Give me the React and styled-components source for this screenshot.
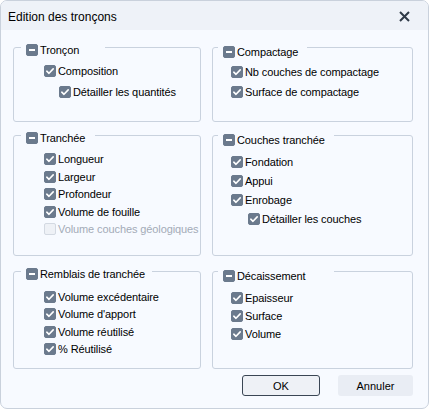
import React from 'react'
import styled, { createGlobalStyle } from 'styled-components'

const Global = createGlobalStyle`
  html, body { margin: 0; padding: 0; background: #ffffff; }
  body { font-family: "Liberation Sans", Arial, sans-serif; }
`

const groups = [
  [
    {
      side: 'left', title: 'Tronçon', width: 84, pad: 8, gap: 9,
      items: [
        { label: 'Composition' },
        { label: 'Détailler les quantités', nested: true },
      ],
    },
    {
      side: 'right', title: 'Compactage', width: 89, pad: 7, gap: 8,
      items: [
        { label: 'Nb couches de compactage' },
        { label: 'Surface de compactage' },
      ],
    },
  ],
  [
    {
      side: 'left', title: 'Tranchée', width: 74, pad: 8, gap: 5.5,
      items: [
        { label: 'Longueur' },
        { label: 'Largeur' },
        { label: 'Profondeur' },
        { label: 'Volume de fouille' },
        { label: 'Volume couches géologiques', disabled: true },
      ],
    },
    {
      side: 'right', title: 'Couches tranchée', width: 116, pad: 9, gap: 7,
      items: [
        { label: 'Fondation' },
        { label: 'Appui' },
        { label: 'Enrobage' },
        { label: 'Détailler les couches', nested: true },
      ],
    },
  ],
  [
    {
      side: 'left', title: 'Remblais de tranchée', width: 131, pad: 10, gap: 5.3,
      items: [
        { label: 'Volume excédentaire' },
        { label: "Volume d'apport" },
        { label: 'Volume réutilisé' },
        { label: '% Réutilisé' },
      ],
    },
    {
      side: 'right', title: 'Décaissement', width: 116, pad: 9, gap: 6,
      items: [
        { label: 'Epaisseur' },
        { label: 'Surface' },
        { label: 'Volume' },
      ],
    },
  ],
]

const rows = [
  { top: 0, h: 75 },
  { top: 13, h: 121 },
  { top: 15, h: 98 },
]

function Box({ state }) {
  return (
    <Check $state={state}>
      {state === 'checked' && (
        <svg width="12" height="12" viewBox="0 0 12 12">
          <path d="M2.8 6.2 L5 8.3 L9.2 3.9" fill="none" stroke="#fff" strokeWidth="1.6" strokeLinecap="round" strokeLinejoin="round" />
        </svg>
      )}
      {state === 'mixed' && (
        <svg width="12" height="12" viewBox="0 0 12 12">
          <rect x="3" y="5" width="6" height="2" fill="#fff" />
        </svg>
      )}
    </Check>
  )
}

function Group({ g }) {
  return (
    <Frame $side={g.side}>
      <Legend $side={g.side} $w={g.width}>
        <Box state="mixed" />
        <Label>{g.title}</Label>
      </Legend>
      <List $pad={g.pad} $gap={g.gap}>
        {g.items.map((it) => (
          <Item key={it.label} $indent={g.side === 'left' ? (it.nested ? 45 : 30) : (it.nested ? 35 : 18)}>
            <Box state={it.disabled ? 'disabled' : 'checked'} />
            <Label $off={it.disabled}>{it.label}</Label>
          </Item>
        ))}
      </List>
    </Frame>
  )
}

export default function App() {
  return (
    <>
      <Global />
      <Window>
        <TitleBar>
          <Title>Edition des tronçons</Title>
          <Close>
            <svg width="11" height="11" viewBox="0 0 11 11">
              <path d="M1 1 L10 10 M10 1 L1 10" stroke="#2f3a47" strokeWidth="2" />
            </svg>
          </Close>
        </TitleBar>
        <Body>
          {groups.map((pair, i) => (
            <Row key={i} $top={rows[i].top} $h={rows[i].h}>
              <Group g={pair[0]} />
              <Group g={pair[1]} />
            </Row>
          ))}
          <Buttons>
            <Button $primary>OK</Button>
            <Button>Annuler</Button>
          </Buttons>
        </Body>
      </Window>
    </>
  )
}

const Window = styled.div`
  box-sizing: border-box;
  width: 429px;
  height: 409px;
  border: 1px solid #c9d1dc;
  border-radius: 7px;
  overflow: hidden;
  background: #f7faff;
  display: flex;
  flex-direction: column;
`

const TitleBar = styled.div`
  height: 29px;
  flex: none;
  background: #eef2f8;
  display: flex;
  align-items: center;
  justify-content: space-between;
  padding: 0 18px 0 7px;
`

const Title = styled.span`
  font-size: 12px;
  color: #000;
  padding-top: 2px;
`

const Close = styled.span`
  display: flex;
  padding-top: 1px;
`

const Body = styled.div`
  flex: 1;
  display: flex;
  flex-direction: column;
  padding: 17px 15px 0 12px;
`

const Row = styled.div`
  display: grid;
  grid-template-columns: 188px 201px;
  column-gap: 11px;
  height: ${(p) => p.$h}px;
  margin-top: ${(p) => p.$top}px;
`

const Frame = styled.div`
  box-sizing: border-box;
  border: 1px solid #c9d2de;
  border-radius: 3px;
  display: flex;
  flex-direction: column;
  align-items: flex-start;
  min-width: 0;
`

const Legend = styled.div`
  box-sizing: border-box;
  display: flex;
  align-items: center;
  gap: 2px;
  height: 14px;
  width: ${(p) => p.$w}px;
  margin-top: ${(p) => (p.$side === 'left' ? -5 : -3)}px;
  margin-left: ${(p) => (p.$side === 'left' ? 7 : 5)}px;
  padding-left: 5px;
  background: #f7faff;
`

const List = styled.div`
  display: flex;
  flex-direction: column;
  gap: ${(p) => p.$gap}px;
  padding-top: ${(p) => p.$pad}px;
`

const Item = styled.div`
  display: flex;
  align-items: center;
  gap: 2px;
  height: 12px;
  margin-left: ${(p) => p.$indent}px;
`

const Check = styled.span`
  box-sizing: border-box;
  flex: none;
  width: 12px;
  height: 12px;
  border-radius: 2px;
  display: flex;
  background: ${(p) => (p.$state === 'disabled' ? '#eef1f6' : '#6b7a8d')};
  border: 1px solid ${(p) => (p.$state === 'disabled' ? '#d3d9e2' : '#6b7a8d')};
  & > svg { margin: -1px; }
`

const Label = styled.span`
  font-size: 11px;
  letter-spacing: -0.1px;
  line-height: 12px;
  white-space: nowrap;
  color: ${(p) => (p.$off ? '#a3abb7' : '#000')};
`

const Buttons = styled.div`
  display: flex;
  justify-content: flex-end;
  gap: 18px;
  margin-top: 6px;
`

const Button = styled.button`
  box-sizing: border-box;
  height: 21px;
  width: ${(p) => (p.$primary ? 78 : 75)}px;
  font-family: "Liberation Sans", Arial, sans-serif;
  font-size: 11px;
  color: #000;
  border-radius: 3px;
  border: 1px solid ${(p) => (p.$primary ? '#3a4654' : 'transparent')};
  background: ${(p) => (p.$primary ? '#eef1f6' : '#e9edf4')};
  padding: 0;
`
